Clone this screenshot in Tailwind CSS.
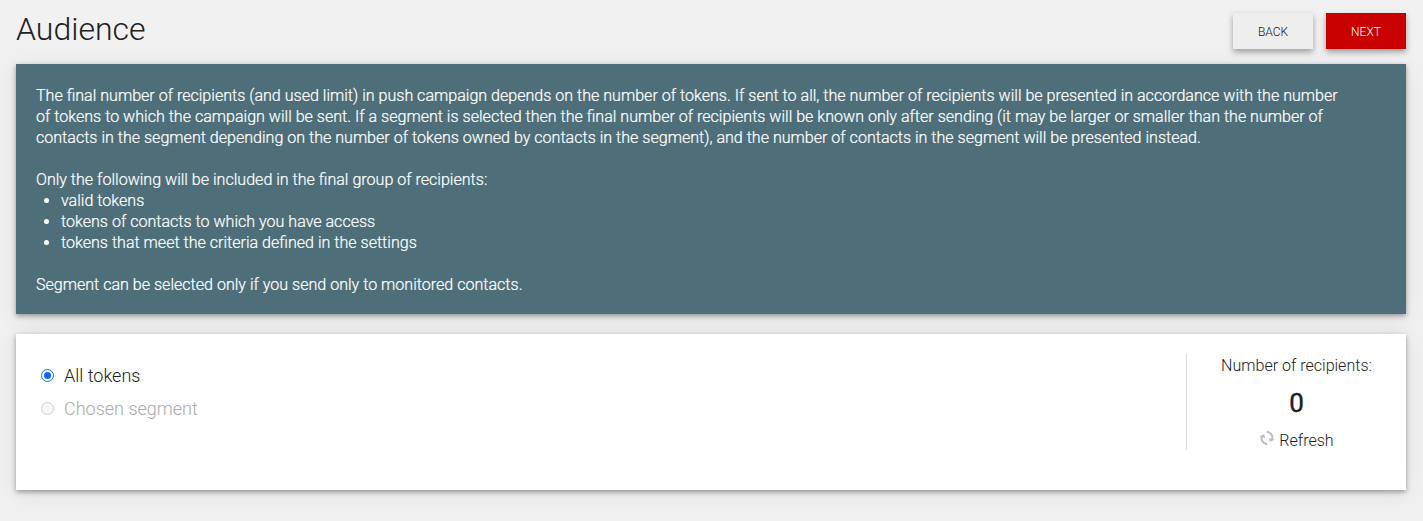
<!DOCTYPE html>
<html lang="en">
  <head>
    <meta charset="UTF-8" />
    <meta name="viewport" content="width=device-width, initial-scale=1.0" />
    <title>Audience</title>
    <script src="https://cdn.jsdelivr.net/npm/@tailwindcss/browser@4"></script>
  </head>
  <body class="bg-[#f1f1f1] min-h-screen px-4 pr-[17px] overflow-hidden font-['Roboto',sans-serif] font-light text-[#212121]">
    <!-- Header -->
    <div class="flex items-start justify-between h-16 pt-[13px]">
      <h1 class="-mt-px text-[32px] leading-[34px]">Audience</h1>
      <div class="flex gap-[13px]">
        <button class="w-20 h-9 pt-0.5 bg-[#eeeeee] text-xs shadow-[0_3px_6px_rgba(0,0,0,0.35)]">BACK</button>
        <button class="w-20 h-9 pt-0.5 bg-[#c90000] text-white text-xs shadow-[0_3px_6px_rgba(0,0,0,0.35)]">NEXT</button>
      </div>
    </div>

    <!-- Info box -->
    <div class="h-[250px] bg-[#4e6f7a] text-white px-5 pt-[21px] text-[16.07px] leading-[21px] whitespace-nowrap [-webkit-text-stroke:0.2px_white] shadow-[0_2px_5px_rgba(0,0,0,0.36),0_3px_25px_rgba(0,0,0,0.08)]">
      <p>
        The final number of recipients (and used limit) in push campaign depends on the number of tokens. If sent to all, the number of recipients will be presented in accordance with the number<br />
        of tokens to which the campaign will be sent. If a segment is selected then the final number of recipients will be known only after sending (it may be larger or smaller than the number of<br />
        contacts in the segment depending on the number of tokens owned by contacts in the segment), and the number of contacts in the segment will be presented instead.
      </p>
      <p class="mt-[21px]">Only the following will be included in the final group of recipients:</p>
      <ul class="list-disc pl-[25px]">
        <li>valid tokens</li>
        <li>tokens of contacts to which you have access</li>
        <li>tokens that meet the criteria defined in the settings</li>
      </ul>
      <p class="mt-[21px]">Segment can be selected only if you send only to monitored contacts.</p>
    </div>

    <!-- Audience selection -->
    <div class="flex justify-between mt-5 h-[156px] bg-white pt-5 shadow-[0_2px_5px_rgba(0,0,0,0.36),0_3px_25px_rgba(0,0,0,0.08)]">
      <div class="pl-[25px] pt-[5px] text-lg leading-[33px]">
        <label class="flex items-center gap-2.5">
          <span class="flex items-center justify-center size-[13px] rounded-full border border-[#0d6efd] bg-white">
            <span class="size-[7px] rounded-full bg-[#0d66ff]"></span>
          </span>
          All tokens
        </label>
        <label class="flex items-center gap-2.5 text-[#a9a9a9]">
          <span class="size-[13px] rounded-full border border-[#cfcfcf] bg-[#f8f8f8]"></span>
          Chosen segment
        </label>
      </div>
      <div class="w-[220px] h-24 border-l border-[#dcdcdc] text-center text-[16.05px]">
        <p class="pt-px leading-[22px]">Number of recipients:</p>
        <p class="mt-[11px] text-[26px] leading-[30px] font-normal [-webkit-text-stroke:0.4px_#212121]">0</p>
        <div class="flex items-center justify-center mt-[13px] leading-5">
          <svg class="w-4 h-4 mr-1 -mt-1.5 text-[#bdbdbd]" viewBox="0 0 16 16" fill="none" stroke="currentColor" stroke-width="2">
            <path d="M8 14.2C4 13.6 1.6 10 3.1 6.2M8 1.8c4 .6 6.4 4.2 4.9 8" />
            <path d="M0.3 6.2 5.2 4.2 6 8zM15.7 9.8l-4.9 2L10 8z" fill="currentColor" stroke="none" />
          </svg>
          Refresh
        </div>
      </div>
    </div>
  </body>
</html>
